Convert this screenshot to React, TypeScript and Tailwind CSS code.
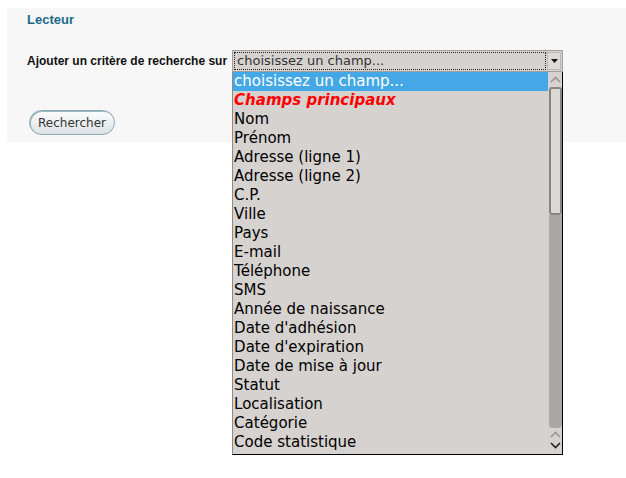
import React from 'react';

const fields = [
  'Nom',
  'Prénom',
  'Adresse (ligne 1)',
  'Adresse (ligne 2)',
  'C.P.',
  'Ville',
  'Pays',
  'E-mail',
  'Téléphone',
  'SMS',
  'Année de naissance',
  "Date d'adhésion",
  "Date d'expiration",
  'Date de mise à jour',
  'Statut',
  'Localisation',
  'Catégorie',
  'Code statistique',
];

const Chevron: React.FC<{ up?: boolean; dark?: boolean }> = ({ up, dark }) => (
  <svg width="11" height="7" viewBox="0 0 11 7">
    <path
      d={up ? 'M1 6 L5.5 1.5 L10 6' : 'M1 1 L5.5 5.5 L10 1'}
      fill="none"
      stroke={dark ? '#222' : '#9a9590'}
      strokeWidth="1.6"
    />
  </svg>
);

const Dropdown: React.FC = () => (
  <div className="absolute left-0 top-[22px] z-10 flex h-[383px] w-[331px] border-l border-l-[#8e8a86] border-r border-b border-r-black border-b-black bg-[#d6d2cf]">
    <ul className="flex-1 overflow-hidden font-['DejaVu_Sans',sans-serif] text-[15px] leading-[19px] text-black">
      <li className="h-[19px] bg-[#44a8e6] pl-px text-white">choisissez un champ...</li>
      <li className="h-[19px] pl-px font-bold italic text-[#ff0000]">Champs principaux</li>
      {fields.map((f) => (
        <li key={f} className="h-[19px] pl-px">
          {f}
        </li>
      ))}
    </ul>
    <div className="flex w-[14px] flex-col items-center">
      <div className="flex h-[15px] items-center justify-center">
        <Chevron up />
      </div>
      <div className="h-[128px] w-[13px] rounded-[3px] border-2 border-[#8a8480] bg-[#dcd8d5]" />
      <div className="h-[213px] w-[13px] rounded-b-[4px] bg-[#aca6a2]" />
      <div className="flex h-[12px] items-center justify-center">
        <Chevron up />
      </div>
      <div className="flex h-[11px] items-center justify-center">
        <Chevron dark />
      </div>
    </div>
  </div>
);

export default function App() {
  return (
    <div className="min-h-[478px] bg-white pt-2 pl-[7px]">
      <div className="h-[134px] bg-[#f7f7f7] pl-5 pt-1">
        <h1 className="font-['Liberation_Sans',Arial,sans-serif] text-[13px] font-bold leading-4 text-[#1a6a8c]">
          Lecteur
        </h1>
        <div className="mt-[22px] flex items-center">
          <label className="mr-[5px] font-['Liberation_Sans',Arial,sans-serif] text-[12px] font-bold text-[#111]">
            Ajouter un critère de recherche sur
          </label>
          <div className="relative">
            <div className="flex h-[22px] w-[331px] items-center border border-[#a3a09c] bg-[#d6d2cf] p-px">
              <div className="flex h-full flex-1 items-center border border-dotted border-[#222] pl-[2px] font-['DejaVu_Sans',sans-serif] text-[13px] text-[#333]">
                choisissez un champ...
              </div>
              <div className="ml-px flex h-full w-[14px] items-center justify-center border border-[#bdb9b5] bg-[#dedad7]">
                <svg width="7" height="4" viewBox="0 0 7 4">
                  <path d="M0 0 L7 0 L3.5 4 Z" fill="#111" />
                </svg>
              </div>
            </div>
            <Dropdown />
          </div>
        </div>
        <button className="ml-[2px] mt-[38px] h-[25px] w-[86px] rounded-full border border-[#8fa6b5] bg-gradient-to-b from-[#fdfdfd] to-[#dde2e6] font-['DejaVu_Sans',sans-serif] text-[12px] text-[#333] shadow-[inset_1px_1px_0_#9bb]">
          Rechercher
        </button>
      </div>
    </div>
  );
}
